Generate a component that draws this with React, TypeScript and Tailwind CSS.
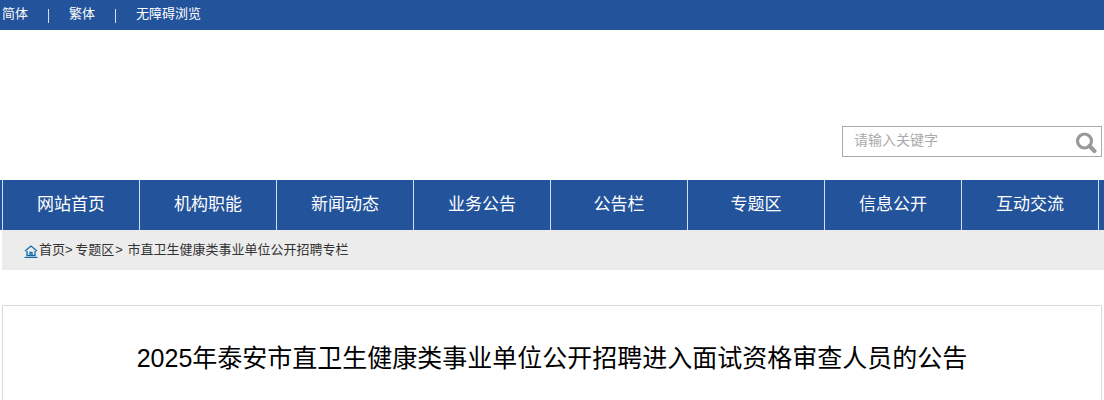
const nav = ["网站首页", "机构职能", "新闻动态", "业务公告", "公告栏", "专题区", "信息公开", "互动交流"];
const font = "font-['Liberation_Sans','Noto_Sans_CJK_SC',sans-serif]";

export default function App() {
  return (
    <div className={`${font} w-[1104px] h-[400px] overflow-hidden bg-white`}>
      <div className="h-[30px] bg-[#23539b] flex items-center text-[13px] text-white pb-[3px]">
        <span className="ml-[2px]">简体</span>
        <span className="ml-[20px] w-px h-[14px] bg-[#cfe0f5] mt-[4px]" />
        <span className="ml-[20px]">繁体</span>
        <span className="ml-[20px] w-px h-[14px] bg-[#cfe0f5] mt-[4px]" />
        <span className="ml-[20px]">无障碍浏览</span>
      </div>
      <div className="h-[150px] flex justify-end items-end pb-[23px] pr-[2px]">
        <div className="w-[260px] h-[31px] border border-[#aaaaaa] flex items-center justify-between pl-[11px] pr-[4px]">
          <span className="text-[14px] text-[#aaaaaa] mb-[2px]">请输入关键字</span>
          <svg width="22" height="22" viewBox="0 0 22 22" fill="none">
            <circle cx="9.5" cy="10" r="7" stroke="#999999" strokeWidth="3.2" />
            <path d="M14.5 15 L19.5 20" stroke="#999999" strokeWidth="4" strokeLinecap="round" />
          </svg>
        </div>
      </div>
      <div className="h-[50px] bg-[#23539b] flex pl-[2px]">
        {nav.map((n) => (
          <div key={n} className="w-[137px] h-full border-l border-[#cfe0f5] flex items-center justify-center text-[17px] text-white">
            {n}
          </div>
        ))}
        <div className="border-l border-[#cfe0f5]" />
      </div>
      <div className="ml-[2px] h-[40px] bg-[#ececec] flex items-center pl-[22px] text-[13px] text-[#333333] pb-[1px]">
        <svg width="14" height="14" viewBox="0 0 14 14" fill="none" stroke="#0f6aa6" strokeWidth="1.3" className="mt-[2px]">
          <path d="M1 7 L7 2 L13 7" />
          <path d="M3 7 V11.5 H11 V7" />
          <path d="M6 11.5 V8.5 H8 V11.5" />
          <path d="M0.5 13.5 H13.5" />
        </svg>
        <span className="ml-[1px]">首页</span>
        <span>&gt;&nbsp;</span>
        <span className="-ml-[1px]">专题区</span>
        <span className="ml-[1px]">&gt;&nbsp;</span>
        <span className="ml-[1px]">市直卫生健康类事业单位公开招聘专栏</span>
      </div>
      <div className="mt-[35px] mx-[2px] h-[200px] border border-[#d9d9d9] pt-[36px] text-center text-[25px] leading-[32px] text-black">
        2025年泰安市直卫生健康类事业单位公开招聘进入面试资格审查人员的公告
      </div>
    </div>
  );
}
